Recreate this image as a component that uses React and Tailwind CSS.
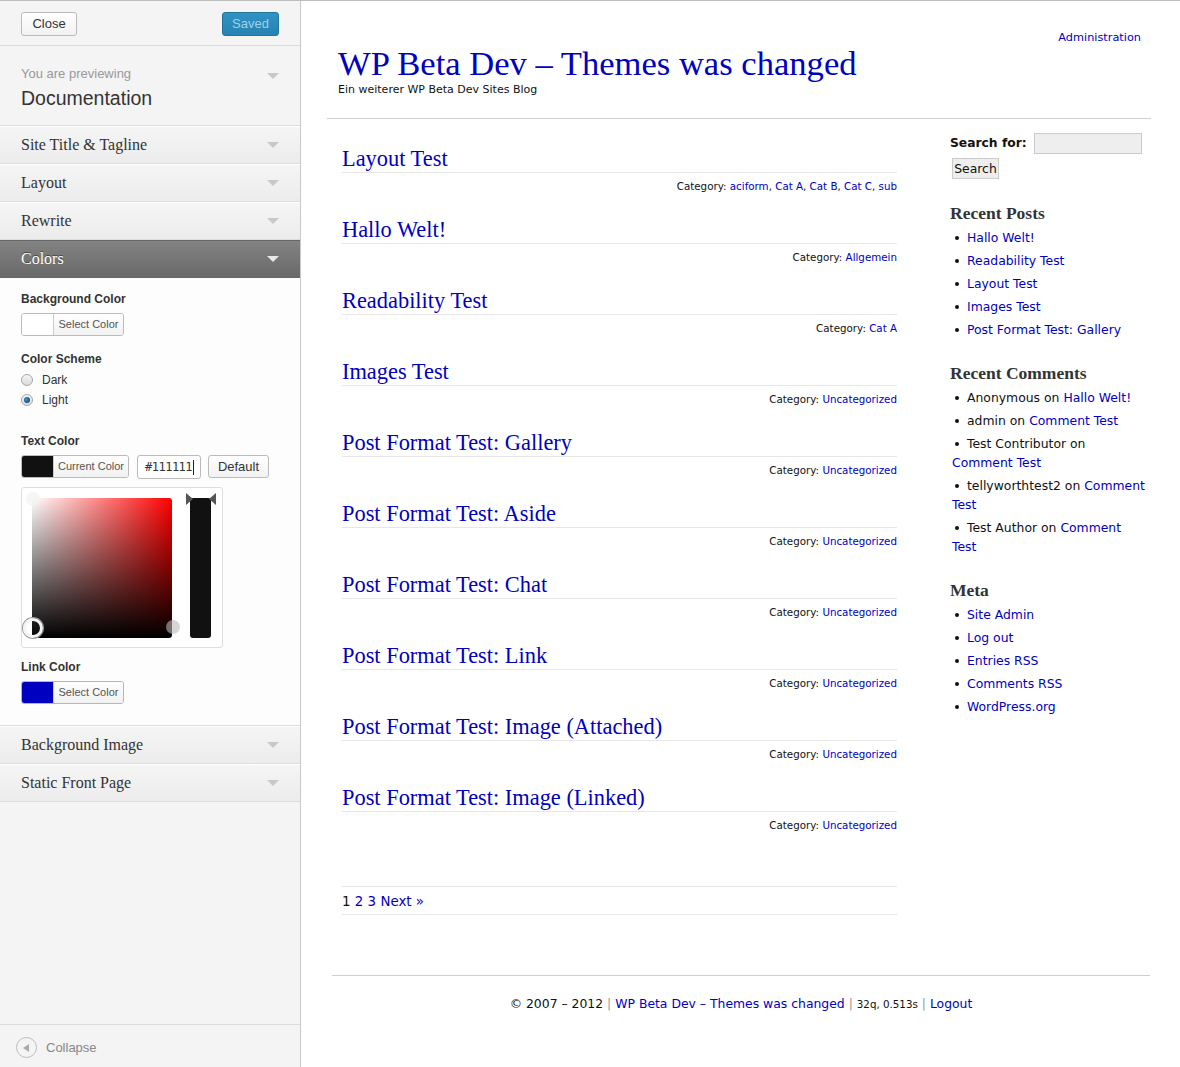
import React from "react";

const SANS = "font-['Liberation_Sans',Arial,sans-serif]";
const SITE = "font-['DejaVu_Sans',Verdana,sans-serif]";
const SERIF = "font-['Liberation_Serif','Times_New_Roman',serif]";

function Tri({ color = "border-t-[#c8c8c8]" }) {
  return <span className={`block w-0 h-0 border-x-[6px] border-x-transparent border-t-[6px] ${color}`} />;
}

function Section({ title, dark }) {
  if (dark) {
    return (
      <div className={`h-[38px] flex items-center justify-between pl-[21px] pr-[21px] bg-gradient-to-b from-[#838383] to-[#696969] border-y border-[#666] ${SERIF} text-[16px] text-white`}>
        <span className="[text-shadow:0_-1px_0_#444]">{title}</span>
        <Tri color="border-t-[#e8e8e8]" />
      </div>
    );
  }
  return (
    <div className={`h-[38px] flex items-center justify-between pl-[21px] pr-[21px] bg-gradient-to-b from-[#f5f5f5] to-[#ececec] border-t border-t-white border-b border-b-[#dcdcdc] ${SERIF} text-[16px] text-[#333]`}>
      <span>{title}</span>
      <Tri />
    </div>
  );
}

function ColorBtn({ color, label, w, border = "border-[#bbb]" }) {
  return (
    <div className={`flex h-[23px] rounded-[3px] border ${border} overflow-hidden ${w}`}>
      <div className="w-[31px] h-full" style={{ background: color }} />
      <div className="flex-1 flex items-center justify-center border-l border-[#ccc] bg-gradient-to-b from-[#fefefe] to-[#f1f1f1] text-[11px] text-[#555]">
        {label}
      </div>
    </div>
  );
}

function Label({ children, className = "" }) {
  return <div className={`text-[12px] leading-[15px] font-bold text-[#333] ${className}`}>{children}</div>;
}

function Radio({ checked, label }) {
  return (
    <div className="h-[20px] flex items-center">
      <span className="w-[12px] h-[12px] rounded-full border border-[#a8a8a8] bg-gradient-to-b from-[#f4f4f4] to-[#dcdcdc] flex items-center justify-center">
        {checked && <span className="w-[6px] h-[6px] rounded-full bg-[radial-gradient(circle_at_40%_40%,#3a9ad9,#0b2a4a)]" />}
      </span>
      <span className="ml-[9px] text-[12px] text-[#333]">{label}</span>
    </div>
  );
}

function Picker() {
  return (
    <div className="relative mt-[8px] w-[202px] h-[161px] border border-[#dedede] rounded-[3px] bg-white">
      <div
        className="absolute left-[10px] top-[10px] w-[140px] h-[140px] rounded-[3px]"
        style={{
          background:
            "linear-gradient(to bottom, rgba(0,0,0,0), #000), linear-gradient(to right, #fff, #ff0000)",
        }}
      />
      <div className="absolute left-[168px] top-[10px] w-[21px] h-[140px] rounded-[3px] bg-[#111]" />
      <svg className="absolute left-[164px] top-[5px]" width="30" height="12" viewBox="0 0 30 12">
        <polygon points="0,0 7,6 0,12" fill="#555" />
        <polygon points="30,0 23,6 30,12" fill="#555" />
      </svg>
      <span className="absolute left-[4px] top-[4px] w-[14px] h-[14px] rounded-full bg-[#f2f2f2] opacity-70" />
      <span className="absolute left-[144px] top-[132px] w-[14px] h-[14px] rounded-full bg-[#bbb] opacity-60" />
      <span className="absolute left-[1px] top-[130px] w-[20px] h-[20px] rounded-full border-[3px] border-[#f4f4f4] shadow-[0_0_0_1px_#999]" />
    </div>
  );
}

function LeftPanel() {
  return (
    <aside className={`w-[301px] shrink-0 h-full flex flex-col bg-[#f4f4f4] border-r border-[#c8c8c8] ${SANS}`}>
      <div className="h-[45px] shrink-0 flex items-start justify-between px-[21px] pt-[11px] border-b border-[#dcdcdc]">
        <button className="w-[56px] h-[24px] rounded-[3px] border border-[#bbb] bg-gradient-to-b from-white to-[#f2f2f2] text-[13px] text-[#333]">
          Close
        </button>
        <button className="w-[57px] h-[24px] rounded-[3px] border border-[#21759b] bg-gradient-to-b from-[#2f93c4] to-[#2783b3] text-[13px] text-[#9fd0ea]">
          Saved
        </button>
      </div>
      <div className="h-[80px] shrink-0 relative pl-[21px] pt-[20px] border-b border-[#dcdcdc]">
        <div className="text-[13px] leading-[16px] text-[#999]">You are previewing</div>
        <div className="mt-[4px] text-[19.5px] leading-[24px] text-[#333]">Documentation</div>
        <div className="absolute right-[21px] top-[27px]">
          <Tri />
        </div>
      </div>
      <Section title="Site Title & Tagline" />
      <Section title="Layout" />
      <Section title="Rewrite" />
      <Section title="Colors" dark />
      <div className="bg-[#fdfdfd] pl-[21px] pt-[14px] pb-[21px] border-b border-[#dcdcdc]">
        <Label>Background Color</Label>
        <div className="mt-[6px]">
          <ColorBtn color="#fff" label="Select Color" w="w-[103px]" />
        </div>
        <Label className="mt-[16px]">Color Scheme</Label>
        <div className="mt-[3px]">
          <Radio label="Dark" />
          <Radio label="Light" checked />
        </div>
        <Label className="mt-[24px]">Text Color</Label>
        <div className="mt-[6px] flex items-start">
          <ColorBtn color="#111" label="Current Color" w="w-[108px]" />
          <div className="ml-[8px] w-[64px] h-[24px] border border-[#bbb] rounded-[3px] bg-white flex items-center pl-[7px] text-[12px] text-[#333] font-['DejaVu_Sans_Mono',monospace] tracking-[-0.5px]">
            #111111<span className="inline-block w-px h-[15px] bg-[#222] ml-px" />
          </div>
          <button className="ml-[7px] w-[61px] h-[23px] rounded-[3px] border border-[#bbb] bg-gradient-to-b from-white to-[#f2f2f2] text-[13px] text-[#333]">
            Default
          </button>
        </div>
        <Picker />
        <Label className="mt-[12px]">Link Color</Label>
        <div className="mt-[6px]">
          <ColorBtn color="#0000c0" label="Select Color" w="w-[103px]" border="border-[#b4b0dc]" />
        </div>
      </div>
      <Section title="Background Image" />
      <Section title="Static Front Page" />
      <div className="flex-1" />
      <div className="h-[43px] shrink-0 border-t border-[#dcdcdc] flex items-center pl-[16px] pt-[3px]">
        <span className="w-[21px] h-[21px] rounded-full border border-[#bbb] flex items-center justify-center">
          <span className="block w-0 h-0 border-y-[4px] border-y-transparent border-r-[6px] border-r-[#aaa] mr-[2px]" />
        </span>
        <span className="ml-[9px] text-[13px] text-[#888]">Collapse</span>
      </div>
    </aside>
  );
}

const LINK = "text-[#0000c0]";

const posts = [
  { t: "Layout Test", c: ["aciform", "Cat A", "Cat B", "Cat C", "sub"] },
  { t: "Hallo Welt!", c: ["Allgemein"] },
  { t: "Readability Test", c: ["Cat A"] },
  { t: "Images Test", c: ["Uncategorized"] },
  { t: "Post Format Test: Gallery", c: ["Uncategorized"] },
  { t: "Post Format Test: Aside", c: ["Uncategorized"] },
  { t: "Post Format Test: Chat", c: ["Uncategorized"] },
  { t: "Post Format Test: Link", c: ["Uncategorized"] },
  { t: "Post Format Test: Image (Attached)", c: ["Uncategorized"] },
  { t: "Post Format Test: Image (Linked)", c: ["Uncategorized"] },
];

function Post({ p, first }) {
  return (
    <div className={first ? "" : "mt-[24px]"}>
      <div className={`${SERIF} text-[22.4px] leading-[26px] ${LINK} border-b border-[#e6e6e6]`}>{p.t}</div>
      <div className="mt-[6px] text-[10.3px] leading-[14px] text-right text-[#111]">
        Category:{" "}
        {p.c.map((c, i) => (
          <React.Fragment key={c}>
            <span className={LINK}>{c}</span>
            {i < p.c.length - 1 ? ", " : ""}
          </React.Fragment>
        ))}
      </div>
    </div>
  );
}

function Bullet() {
  return <span className="inline-block w-[4px] h-[4px] rounded-full bg-[#111] ml-[3px] mr-[8px] align-middle relative -top-px" />;
}

function Widget({ title, children, className = "" }) {
  return (
    <div className={className}>
      <div className={`${SERIF} font-bold text-[17.5px] leading-[18px] text-[#333]`}>{title}</div>
      <ul className="mt-[6px] flex flex-col gap-[4px] text-[12.4px] leading-[19px] text-[#111]">{children}</ul>
    </div>
  );
}

function Li({ children }) {
  return (
    <li className="pl-[2px]">
      <Bullet />
      {children}
    </li>
  );
}

function Preview() {
  return (
    <main className={`flex-1 h-full bg-white ${SITE} text-[#111]`}>
      <div className="w-[824px] ml-[26px]">
        <header className="h-[118px] border-b border-[#cfcfcf] flex justify-between items-start">
          <div className="pl-[11px] pt-[42px]">
            <div className={`${SERIF} text-[34.6px] leading-[40px] ${LINK}`}>WP Beta Dev – Themes was changed</div>
            <div className="text-[11px] leading-[14px]">Ein weiterer WP Beta Dev Sites Blog</div>
          </div>
          <div className={`pt-[30px] pr-[10px] text-[11.3px] leading-[14px] ${LINK}`}>Administration</div>
        </header>
        <div className="flex">
          <div className="w-[555px] ml-[15px] pt-[27px]">
            {posts.map((p, i) => (
              <Post key={p.t} p={p} first={i === 0} />
            ))}
            <div className="mt-[54px] border-y border-[#e6e6e6] h-[29px] flex items-center pt-[3px] text-[13.4px]">
              <span>
                <span className="text-[#111]">1</span> <span className={LINK}>2</span> <span className={LINK}>3</span>{" "}
                <span className={LINK}>Next »</span>
              </span>
            </div>
          </div>
          <div className="ml-[53px] w-[201px] pt-[14px]">
            <div className="flex items-center h-[20px]">
              <span className="text-[12.3px] font-bold">Search for:</span>
              <span className="ml-[7px] w-[108px] h-[21px] bg-[#eee] border border-[#ccc]" />
            </div>
            <button className="mt-[5px] ml-[2px] h-[21px] w-[47px] bg-[#eee] border border-[#ccc] text-[12.4px] leading-[19px]">
              Search
            </button>
            <Widget title="Recent Posts" className="mt-[24px]">
              <Li><span className={LINK}>Hallo Welt!</span></Li>
              <Li><span className={LINK}>Readability Test</span></Li>
              <Li><span className={LINK}>Layout Test</span></Li>
              <Li><span className={LINK}>Images Test</span></Li>
              <Li><span className={LINK}>Post Format Test: Gallery</span></Li>
            </Widget>
            <Widget title="Recent Comments" className="mt-[25px]">
              <Li>Anonymous on <span className={LINK}>Hallo Welt!</span></Li>
              <Li>admin on <span className={LINK}>Comment Test</span></Li>
              <Li>Test Contributor on<br /><span className={LINK}>Comment Test</span></Li>
              <Li>tellyworthtest2 on <span className={LINK}>Comment</span><br /><span className={LINK}>Test</span></Li>
              <Li>Test Author on <span className={LINK}>Comment</span><br /><span className={LINK}>Test</span></Li>
            </Widget>
            <Widget title="Meta" className="mt-[25px]">
              <Li><span className={LINK}>Site Admin</span></Li>
              <Li><span className={LINK}>Log out</span></Li>
              <Li><span className={LINK}>Entries RSS</span></Li>
              <Li><span className={LINK}>Comments RSS</span></Li>
              <Li><span className={LINK}>WordPress.org</span></Li>
            </Widget>
          </div>
        </div>
        <footer className="mt-[60px] ml-[5px] w-[818px] border-t border-[#cfcfcf] pt-[20px] text-center text-[12.4px] leading-[16px] whitespace-nowrap">
          © 2007 – 2012 <span className="text-[#999]">|</span> <span className={LINK}>WP Beta Dev – Themes was changed</span>{" "}
          <span className="text-[#999]">|</span> <span className="text-[10.3px]">32q, 0.513s</span>{" "}
          <span className="text-[#999]">|</span> <span className={LINK}>Logout</span>
        </footer>
      </div>
    </main>
  );
}

export default function App() {
  return (
    <div className="w-[1180px] h-[1067px] flex border-t border-[#bdbdbd] overflow-hidden">
      <LeftPanel />
      <Preview />
    </div>
  );
}
